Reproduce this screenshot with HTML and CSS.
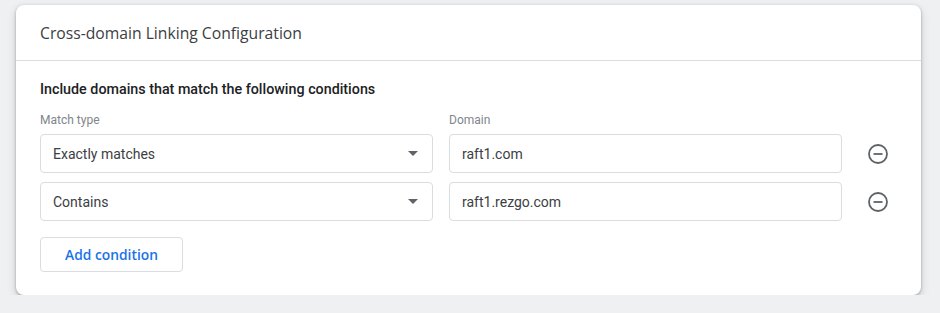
FILE: index.html
```html
<!DOCTYPE html>
<html lang="en">
<head>
  <meta charset="UTF-8" />
  <title>Cross-domain Linking Configuration</title>
  <link rel="stylesheet" href="styles.css">
</head>
<body>
  <section class="card">
    <header class="card-header">
      <h1>Cross-domain Linking Configuration</h1>
    </header>
    <div class="card-body">
      <h2>Include domains that match the following conditions</h2>
      <div class="conditions">
        <span class="field-label">Match type</span>
        <span class="field-label">Domain</span>
        <span></span>

        <div class="select">
          <span>Exactly matches</span>
          <span class="caret"></span>
        </div>
        <div class="input">raft1.com</div>
        <button class="remove" title="Remove">
          <svg viewBox="0 0 24 24" width="24" height="24"><circle cx="12" cy="12" r="9" fill="none" stroke="#5f6368" stroke-width="1.8"/><path d="M7.5 12h9" stroke="#5f6368" stroke-width="1.8"/></svg>
        </button>

        <div class="select">
          <span>Contains</span>
          <span class="caret"></span>
        </div>
        <div class="input">raft1.rezgo.com</div>
        <button class="remove" title="Remove">
          <svg viewBox="0 0 24 24" width="24" height="24"><circle cx="12" cy="12" r="9" fill="none" stroke="#5f6368" stroke-width="1.8"/><path d="M7.5 12h9" stroke="#5f6368" stroke-width="1.8"/></svg>
        </button>
      </div>
      <button class="add-button">Add condition</button>
    </div>
  </section>
</body>
</html>
```

FILE: styles.css
```css
body {
  margin: 0;
  padding: 5px 19px 0 16px;
  background-color: #eef0f2;
  font-family: Roboto, 'Liberation Sans', sans-serif;
  color: #202124;
}
.card {
  background: white;
  border-radius: 8px;
  box-shadow: 0 1px 3px rgba(60,64,67,0.4), 0 4px 10px rgba(60,64,67,0.18);
  height: 290px;
}
.card-header {
  height: 55px;
  padding: 0 24px;
  display: flex;
  align-items: center;
  border-bottom: 1px solid #dadce0;
}
.card-header h1 {
  margin: 0;
  font-family: 'Open Sans', Roboto, sans-serif;
  font-size: 15.7px;
  font-weight: 400;
  color: #3c4043;
}
.card-body {
  padding: 18px 24px 0;
}
.card-body h2 {
  margin: 0 0 14px;
  font-size: 14.3px;
  font-weight: 500;
  line-height: 20px;
  color: #202124;
}
.conditions {
  display: grid;
  grid-template-columns: 393px 393px 40px;
  column-gap: 16px;
  row-gap: 9px;
  align-items: center;
}
.field-label {
  font-size: 12px;
  line-height: 14px;
  color: #80868b;
  margin-bottom: -2px;
}
.select, .input {
  height: 39px;
  box-sizing: border-box;
  border: 1px solid #dadce0;
  border-radius: 4px;
  padding: 0 12px;
  display: flex;
  align-items: center;
  font-size: 14px;
  color: #3c4043;
}
.select {
  justify-content: space-between;
}
.caret {
  width: 0;
  height: 0;
  border-left: 5px solid transparent;
  border-right: 5px solid transparent;
  border-top: 5px solid #5f6368;
  margin-right: 2px;
}
.remove {
  border: none;
  background: none;
  padding: 0;
  width: 40px;
  height: 24px;
  display: flex;
  justify-content: center;
  cursor: pointer;
}
.add-button {
  margin-top: 16px;
  width: 143px;
  height: 35px;
  background: white;
  border: 1px solid #dadce0;
  border-radius: 4px;
  font-family: 'Open Sans', Roboto, sans-serif;
  font-size: 13.8px;
  font-weight: 600;
  color: #1a73e8;
  cursor: pointer;
}
```
